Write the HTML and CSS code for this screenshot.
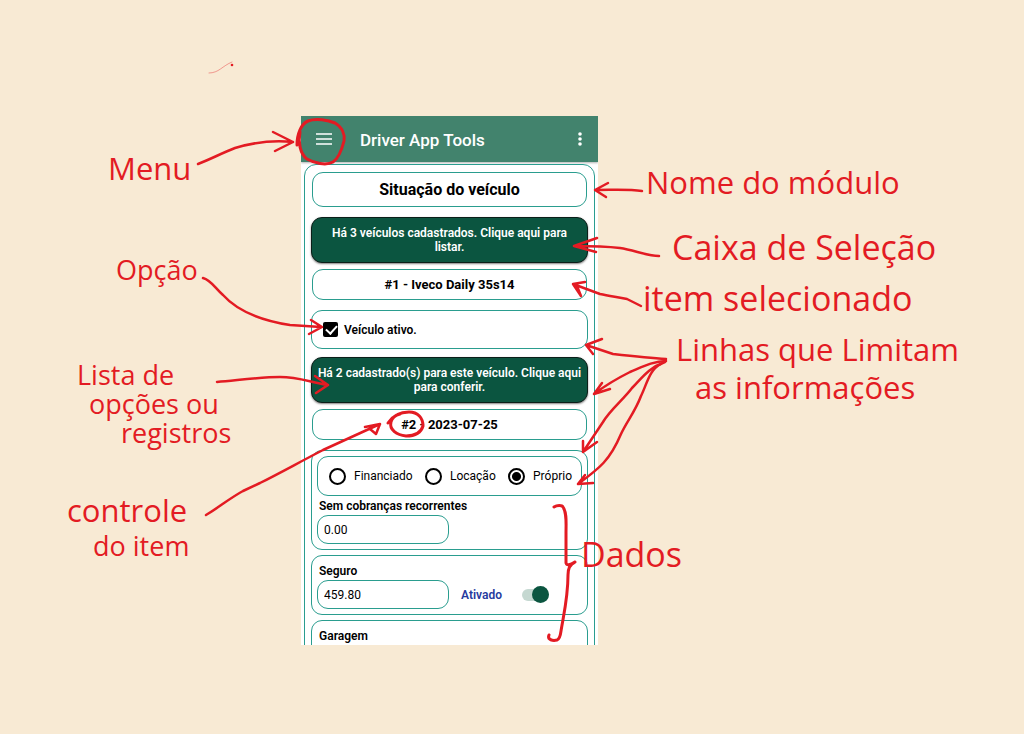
FILE: index.html
```
<!DOCTYPE html>
<html lang="pt-BR">
<head>
    <meta charset="UTF-8">
    <meta name="viewport" content="width=device-width, initial-scale=1.0">
    <title>Driver App Tools</title>
    <link rel="stylesheet" href="styles.css">
</head>
<body>
    <main class="board">
        <div class="phone">
            <div class="screen">
                <header class="appbar">
                    <button class="icon-btn" type="button" aria-label="Menu">
                        <svg width="16" height="12" viewBox="0 0 16 12"><path d="M0 1h16M0 6h16M0 11h16" stroke="#fff" stroke-width="1.5"/></svg>
                    </button>
                    <h1>Driver App Tools</h1>
                    <button class="icon-btn more" type="button" aria-label="Mais">
                        <svg width="4" height="14" viewBox="0 0 4 14" fill="#fff"><circle cx="2" cy="2" r="1.8"/><circle cx="2" cy="7" r="1.8"/><circle cx="2" cy="12" r="1.8"/></svg>
                    </button>
                </header>

                <form class="panel">
                    <h2 class="box title">Situação do veículo</h2>
                    <button class="list-btn" type="button">Há 3 veículos cadastrados. Clique aqui para listar.</button>
                    <div class="box item">#1 - Iveco Daily 35s14</div>
                    <label class="box active"><input type="checkbox" checked> Veículo ativo.</label>
                    <button class="list-btn" type="button">Há 2 cadastrado(s) para este veículo. Clique aqui para conferir.</button>
                    <div class="box item">#2 - 2023-07-25</div>

                    <div class="box group">
                        <div class="box radios">
                            <label><input type="radio" name="tipo"> Financiado</label>
                            <label><input type="radio" name="tipo"> Locação</label>
                            <label><input type="radio" name="tipo" checked> Próprio</label>
                        </div>
                        <label class="name" for="cobranca">Sem cobranças recorrentes</label>
                        <input class="value" type="text" id="cobranca" value="0.00">
                    </div>

                    <div class="box group spaced">
                        <label class="name" for="seguro">Seguro</label>
                        <div class="row">
                            <input class="value" type="text" id="seguro" value="459.80">
                            <label class="state" for="ativado">Ativado</label>
                            <input class="switch" type="checkbox" id="ativado" checked>
                        </div>
                    </div>

                    <div class="box group spaced">
                        <label class="name" for="garagem">Garagem</label>
                        <input class="value" type="text" id="garagem">
                    </div>
                </form>
            </div>

            <!-- red pen notes drawn over the phone -->
            <svg class="notes" viewBox="301 116 297 529">
                <path class="faint" d="M209 73C219 73 222 66 232 62"/>
                <circle class="dot" cx="232" cy="65" r="1.3"/>

                <!-- left side -->
                <path d="M198 164C211 159 222 153 235 148Q265 139 293 142M273 132L293 142L275 151"/>
                <path class="thick" d="M297 145C297 134 301 124 308 121C316 118 328 120 335 123C342 127 345 134 344 141C342 149 339 158 333 162C326 166 314 163 307 159C300 154 298 142 300 132"/>
                <path d="M203 278C211 280 216 289 223 295C239 313 265 321 290 325L321 327M311 320L322 327L309 334"/>
                <path d="M217 382C240 380 262 377 280 377C299 377 309 382 328 385M315 376L328 385L316 393"/>
                <path d="M206 515C218 508 230 498 243 491L260 483C280 473 296 464 323 450L380 424M365 427L380 424L376 434L370 429"/>
                <path class="thick" d="M388 423C392 417 399 412 409 412C418 412 423 418 423 426C421 433 414 436 406 436C397 435 389 430 391 422C392 418 396 415 400 414"/>

                <!-- right side -->
                <path d="M642 191C628 189 614 190 595 190M608 183L595 190L606 197"/>
                <path d="M659 256C647 256 634 250 620 248C603 246 591 246 574 246M597 238L574 246L596 252"/>
                <path d="M641 306L627 299C617 297 609 296 600 294L573 284M585 282L573 284L581 296L577 286"/>
                <path d="M666 359C649 358 631 356 613 354Q598 349 586 345M602 339L586 345L593 354"/>
                <path d="M666 361C653 361 642 367 630 372Q610 382 594 394M602 383L594 394L610 389"/>
                <path d="M665 362C648 368 642 378 632 388C623 400 610 410 603 422Q593 437 583 452M583 441L583 452L597 442"/>
                <path d="M661 364C649 370 647 384 641 396C635 412 627 421 621 434C610 460 600 468 578 484M585 475L578 484L593 483"/>
                <path class="thick" d="M554 507C557 505 562 505 563 507C567 513 566 523 566 533L566 563Q567 567 575 562C570 564 568 568 568 575C568 597 564 613 561 631Q560 639 557 640C553 641 547 640 549 635"/>

                <g>
                    <text x="108" y="180">Menu</text>
                    <text class="small" x="116" y="280">Opção</text>
                    <text class="small" x="77" y="385">Lista de</text>
                    <text class="small" x="89" y="414">opções ou</text>
                    <text class="small" x="121" y="443">registros</text>
                    <text x="67" y="522">controle</text>
                    <text class="small" x="93" y="556">do item</text>
                    <text x="646" y="194">Nome do módulo</text>
                    <text class="big" x="672" y="260">Caixa de Seleção</text>
                    <text class="big" x="643" y="311">item selecionado</text>
                    <text x="676" y="361">Linhas que Limitam</text>
                    <text x="695" y="399">as informações</text>
                    <text class="big" x="581" y="567">Dados</text>
                </g>
            </svg>
        </div>
    </main>
</body>
</html>
```
FILE: styles.css
```
*{
    margin: 0;
    padding: 0;
    box-sizing: border-box;
}
body{
    background-color: #f8ead4;
    font-family: Roboto, "Liberation Sans", sans-serif;
    font-size: 12px;
    color: #000;
    overflow-x: hidden;
}
/* the phone sits a little left of the centre, notes on both sides */
.board{
    display: grid;
    grid-template-columns: 301fr 297px 426fr;
    padding: 116px 0 80px;
}
.phone{
    grid-column: 2;
    position: relative;
}
.screen{
    height: 529px;
    overflow: hidden;
    background-color: #fff;
}

.appbar{
    display: flex;
    align-items: center;
    height: 46px;
    padding: 0 16px 0 15px;
    background-color: #42836d;
    box-shadow: 0 1px 2px rgba(0,0,0,.3);
    color: #fff;
}
.appbar h1{
    margin-left: 28px;
    padding-top: 2px;
    font-size: 17px;
    font-weight: 500;
    line-height: 20px;
}
.icon-btn{
    display: flex;
    border: none;
    background: none;
}
.more{
    margin-left: auto;
}

.panel{
    display: flex;
    flex-direction: column;
    margin: 2px 3px 0;
    padding: 7px 6px;
    border: 1px solid #2a9d8f;
    border-radius: 12px;
}
.box{
    border: 1px solid #2a9d8f;
    border-radius: 11px;
}
.title{
    margin: 0 1px 10px;
    padding-top: 1px;
    font-size: 16px;
    line-height: 32px;
    text-align: center;
}
.list-btn{
    height: 46px;
    padding: 0 4px;
    border: 1px solid #0b1f19;
    border-radius: 11px;
    background-color: #0b5540;
    box-shadow: 0 1px 2px rgba(0,0,0,.5);
    color: #fff;
    font: 600 12px/14px Roboto, "Liberation Sans", sans-serif;
}
/* keeps the last word of the first line from touching the edge */
.title + .list-btn{
    padding: 0 16px;
}
.item{
    margin: 6px 1px 10px;
    padding-top: 1px;
    font-size: 13px;
    font-weight: bold;
    line-height: 28px;
    text-align: center;
}
.active{
    display: flex;
    align-items: center;
    gap: 6px;
    height: 39px;
    margin-bottom: 8px;
    padding-left: 11px;
    font-weight: 600;
}

input{
    appearance: none;
    flex: none;
}
.active input{
    width: 15px;
    height: 15px;
    border-radius: 2px;
    background-color: #000;
}
.active input:checked::after{
    content: "";
    display: block;
    width: 5px;
    height: 9px;
    margin: 1px 5px;
    border: solid #fff;
    border-width: 0 2px 2px 0;
    transform: rotate(42deg);
}

.group{
    margin-bottom: 5px;
    padding: 5px;
}
.spaced{
    padding-top: 8px;
}
.radios{
    display: flex;
    align-items: center;
    justify-content: space-between;
    height: 40px;
    padding: 0 9px 0 11px;
    margin-bottom: 3px;
}
.radios label{
    display: flex;
    align-items: center;
    gap: 8px;
}
.radios input{
    width: 17px;
    height: 17px;
    border: 2px solid #000;
    border-radius: 50%;
}
.radios input:checked{
    background: radial-gradient(circle, #000 4px, transparent 5px);
}
.name{
    display: block;
    padding-left: 2px;
    margin-bottom: 2px;
    font-weight: 600;
    line-height: 14px;
}
.value{
    display: block;
    width: 132px;
    height: 29px;
    padding: 0 6px;
    border: 1px solid #2a9d8f;
    border-radius: 11px;
    background: #fff;
    font: 12px Roboto, "Liberation Sans", sans-serif;
}
.row{
    display: flex;
    align-items: center;
}
.state{
    margin: 0 20px 0 12px;
    color: #263a9e;
    font-weight: 600;
}
.switch{
    display: flex;
    align-items: center;
    justify-content: flex-end;
    width: 27px;
    height: 12px;
    border-radius: 6px;
    background-color: #c5d8d1;
}
.switch::after{
    content: "";
    flex: none;
    width: 17px;
    height: 17px;
    border-radius: 50%;
    background-color: #0b5540;
}

.notes{
    position: absolute;
    top: 0;
    left: 0;
    width: 100%;
    height: 100%;
    overflow: visible;
    pointer-events: none;
}
.notes path{
    fill: none;
    stroke: #e31b23;
    stroke-width: 2.5;
    stroke-linecap: round;
    stroke-linejoin: round;
}
.notes .thick{
    stroke-width: 3;
}
.notes .faint{
    stroke-width: 1;
    opacity: .4;
}
.notes text, .notes .dot{
    fill: #e31b23;
}
.notes text{
    font-family: "Open Sans", "Noto Sans", sans-serif;
    font-size: 31px;
    font-weight: 500;
}
.notes .small{
    font-size: 27px;
}
.notes .big{
    font-size: 34px;
}
```
